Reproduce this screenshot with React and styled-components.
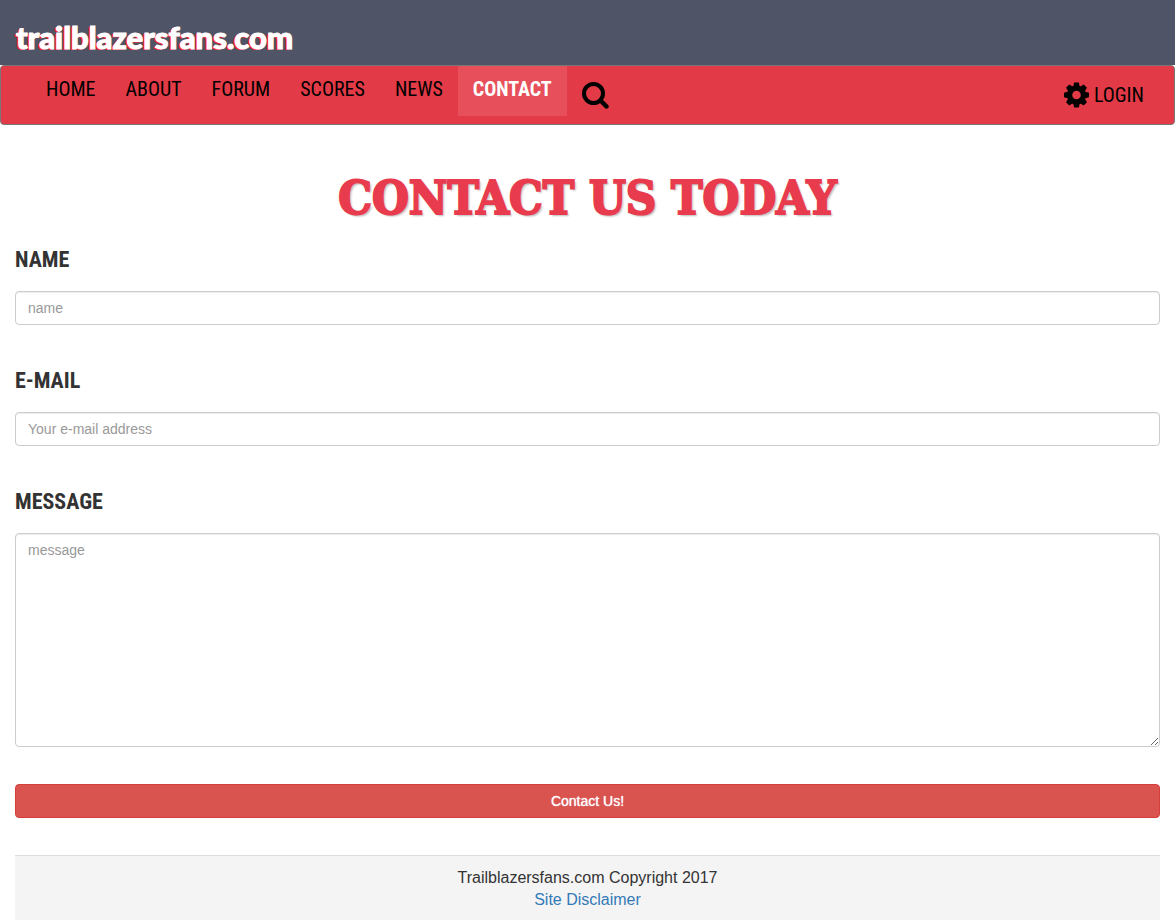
import React from "react";
import styled, { createGlobalStyle } from "styled-components";

const display = '"Roboto Condensed", Roboto, "Liberation Sans", sans-serif';

const GlobalStyle = createGlobalStyle`
  *, *::before, *::after { box-sizing: border-box; }
  body {
    margin: 0;
    background: #fff;
    color: #333;
    font: 14px/20px "Liberation Sans", sans-serif;
  }
`;

const Masthead = styled.header`
  height: 65px;
  padding: 20px 16px 0;
  background: #4f5467;
`;

const Brand = styled.a`
  color: #fff;
  font: 900 31px/34px Lato, sans-serif;
  text-decoration: none;
  text-shadow: -1px 0 #ff2a2f, -2px 1px #ff2a2f;
  -webkit-text-stroke: 1px #fff;
`;

const Navbar = styled.nav`
  display: flex;
  justify-content: space-between;
  min-height: 60px;
  padding: 0 15px;
  border: 1px solid #777;
  border-radius: 4px;
  background: #e23a46;
`;

const NavList = styled.ul`
  display: flex;
  align-items: flex-start;
  margin: 0;
  padding: 0 0 0 15px;
  list-style: none;
`;

const NavLink = styled.a`
  display: flex;
  align-items: center;
  gap: 5px;
  height: ${(p) => (p.$tall ? "58px" : "50px")};
  padding: 0 15px ${(p) => (p.$tall ? "0" : "5px")};
  color: ${(p) => (p.$active ? "#fff" : "#000")};
  background: ${(p) => (p.$active ? "#e74f5b" : "transparent")};
  font: ${(p) => (p.$active ? 700 : 400)} 20px/24px ${display};
  text-decoration: none;
`;

const Content = styled.main`
  padding: 37px 15px 0;
`;

const Title = styled.h1`
  margin: 0;
  color: #e83c4e;
  font: 700 47px/72px "DejaVu Serif Condensed", "DejaVu Serif", serif;
  text-align: center;
  text-shadow: 2px 2px 2px #bbb;
  -webkit-text-stroke: 2px #e83c4e;
`;

const Field = styled.div`
  display: flex;
  flex-direction: column;
  gap: 13px;
  margin-bottom: 37px;
`;

const Label = styled.label`
  color: #333;
  font: 700 22px/37px ${display};
  margin-top: ${(p) => (p.$first ? "7px" : "0")};
`;

const control = `
  display: block;
  width: 100%;
  padding: 6px 12px;
  border: 1px solid #ccc;
  border-radius: 4px;
  background: #fff;
  box-shadow: inset 0 1px 1px rgba(0, 0, 0, 0.075);
  color: #555;
  font: 14px/20px "Liberation Sans", sans-serif;
  &::placeholder { color: #999; opacity: 1; }
`;

const TextInput = styled.input`
  ${control}
  height: 34px;
`;

const MessageBox = styled.textarea`
  ${control}
  height: 214px;
  resize: vertical;
`;

const SubmitButton = styled.button`
  display: block;
  width: 100%;
  height: 34px;
  border: 1px solid #d43f3a;
  border-radius: 4px;
  background: #d9534f;
  color: #fff;
  font: 400 14px/20px "Liberation Sans", sans-serif;
  text-shadow: 0 0 1px #fff;
`;

const Footer = styled.footer`
  margin: 37px 15px 0;
  padding: 11px 0 10px;
  border-top: 1px solid #ddd;
  background: #f4f4f4;
  font-size: 16px;
  line-height: 22px;
  text-align: center;
`;

const FooterLine = styled.p`
  margin: 0;
`;

const FooterLink = styled.a`
  color: #337ab7;
  text-decoration: none;
`;

const SearchIcon = () => (
  <svg width="28" height="28" viewBox="0 0 28 28" aria-hidden="true">
    <circle cx="11.5" cy="12.5" r="9.5" fill="none" stroke="#000" strokeWidth="4" />
    <path d="M18.5 19.5L24.5 25.5" stroke="#000" strokeWidth="4.4" strokeLinecap="round" />
  </svg>
);

const CogIcon = () => (
  <svg width="25" height="26" viewBox="-12.5 -13 25 26" aria-hidden="true">
    {[0, 45, 90, 135].map((angle) => (
      <path
        key={angle}
        transform={`rotate(${angle})`}
        d="M-3.4 -8L-2.3 -12.5H2.3L3.4 -8V8L2.3 12.5H-2.3L-3.4 8Z"
      />
    ))}
    <circle r="9.4" />
    <circle r="4.3" fill="#e23a46" />
  </svg>
);

const pages = ["HOME", "ABOUT", "FORUM", "SCORES", "NEWS", "CONTACT"];

export default function App() {
  return (
    <>
      <GlobalStyle />
      <Masthead>
        <Brand href="#home">trailblazersfans.com</Brand>
      </Masthead>
      <Navbar aria-label="Main">
        <NavList>
          {pages.map((page) => (
            <li key={page}>
              <NavLink href={`#${page.toLowerCase()}`} $active={page === "CONTACT"}>
                {page}
              </NavLink>
            </li>
          ))}
          <li>
            <NavLink href="#search" aria-label="Search" $tall>
              <SearchIcon />
            </NavLink>
          </li>
        </NavList>
        <NavLink href="#login" $tall>
          <CogIcon />
          LOGIN
        </NavLink>
      </Navbar>
      <Content>
        <Title>CONTACT US TODAY</Title>
        <form onSubmit={(e) => e.preventDefault()}>
          <Field>
            <Label htmlFor="name" $first>NAME</Label>
            <TextInput id="name" type="text" placeholder="name" />
          </Field>
          <Field>
            <Label htmlFor="email">E-MAIL</Label>
            <TextInput id="email" type="email" placeholder="Your e-mail address" />
          </Field>
          <Field>
            <Label htmlFor="message">MESSAGE</Label>
            <MessageBox id="message" placeholder="message" />
          </Field>
          <SubmitButton type="submit">Contact Us!</SubmitButton>
        </form>
      </Content>
      <Footer>
        <FooterLine>Trailblazersfans.com Copyright 2017</FooterLine>
        <FooterLine>
          <FooterLink href="#disclaimer">Site Disclaimer</FooterLink>
        </FooterLine>
      </Footer>
    </>
  );
}
